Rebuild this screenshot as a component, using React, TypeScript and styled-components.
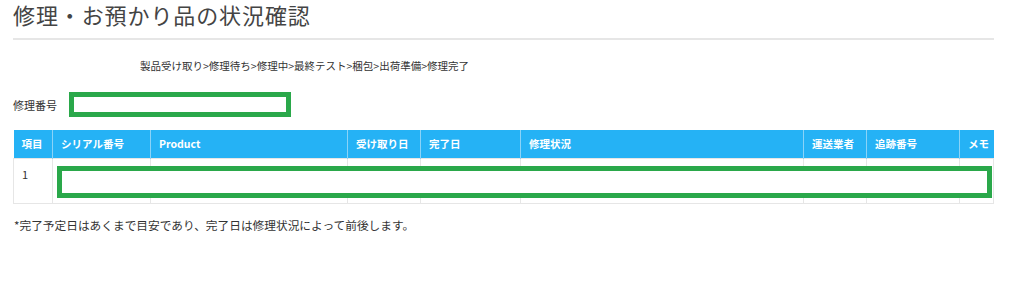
import React from "react";
import styled, { createGlobalStyle } from "styled-components";

const GlobalStyle = createGlobalStyle`
  body {
    margin: 0;
    background: #ffffff;
    font-family: "Noto Sans CJK JP", "Noto Sans", sans-serif;
    color: #333333;
  }
`;

const Page = styled.div`
  padding: 0 30px 0 13px;
  width: 981px;
`;

const Title = styled.h1`
  margin: 0;
  padding-top: 1px;
  font-size: 22px;
  font-weight: 400;
  line-height: 26px;
  color: #444444;
  letter-spacing: 0.9px;
  border-bottom: 2px solid #e6e6e6;
  padding-bottom: 11px;
`;

const Steps = styled.p`
  margin: 18px 0 0 127px;
  font-size: 10.5px;
  line-height: 16px;
  color: #333333;
`;

const NumberRow = styled.div`
  display: flex;
  align-items: center;
  gap: 12px;
  margin-top: 18px;
  font-size: 11px;
`;

const Redacted = styled.div<{ $w?: number }>`
  box-sizing: border-box;
  width: ${(p) => (p.$w ? `${p.$w}px` : "auto")};
  height: 25px;
  border: 5px solid #2aa84a;
  background: #ffffff;
`;

const TableWrap = styled.div`
  position: relative;
  margin-top: 13px;
`;

const Table = styled.table`
  width: 980px;
  border-collapse: collapse;
  table-layout: fixed;
  font-size: 11px;
`;

const Th = styled.th`
  box-sizing: border-box;
  height: 28px;
  padding: 0 8px;
  background: #25b2f5;
  color: #ffffff;
  font-size: 10.5px;
  font-weight: 700;
  text-align: left;
  white-space: nowrap;
  border-left: 1px solid #8ad3f8;
  &:first-child {
    border-left: none;
  }
`;

const Td = styled.td`
  box-sizing: border-box;
  height: 45px;
  padding: 7px 8px 0;
  vertical-align: top;
  border: 1px solid #e6e6e6;
`;

const RowCover = styled(Redacted)`
  position: absolute;
  left: 44px;
  top: 36px;
  width: 935px;
  height: 32px;
`;

const Note = styled.p`
  margin: 13px 0 0 1px;
  font-size: 11.7px;
  line-height: 16px;
`;

const columns: [string, number][] = [
  ["項目", 39],
  ["シリアル番号", 98],
  ["Product", 197],
  ["受け取り日", 73],
  ["完了日", 100],
  ["修理状況", 283],
  ["運送業者", 63],
  ["追跡番号", 93],
  ["メモ", 34],
];

export default function App() {
  return (
    <Page>
      <GlobalStyle />
      <Title>修理・お預かり品の状況確認</Title>
      <Steps>製品受け取り&gt;修理待ち&gt;修理中&gt;最終テスト&gt;梱包&gt;出荷準備&gt;修理完了</Steps>
      <NumberRow>
        修理番号
        <Redacted $w={222} />
      </NumberRow>
      <TableWrap>
        <Table>
          <colgroup>
            {columns.map(([label, w]) => (
              <col key={label} style={{ width: w }} />
            ))}
          </colgroup>
          <thead>
            <tr>
              {columns.map(([label]) => (
                <Th key={label}>{label}</Th>
              ))}
            </tr>
          </thead>
          <tbody>
            <tr>
              {columns.map(([label], i) => (
                <Td key={label}>{i === 0 ? "1" : ""}</Td>
              ))}
            </tr>
          </tbody>
        </Table>
        <RowCover />
      </TableWrap>
      <Note>*完了予定日はあくまで目安であり、完了日は修理状況によって前後します。</Note>
    </Page>
  );
}
